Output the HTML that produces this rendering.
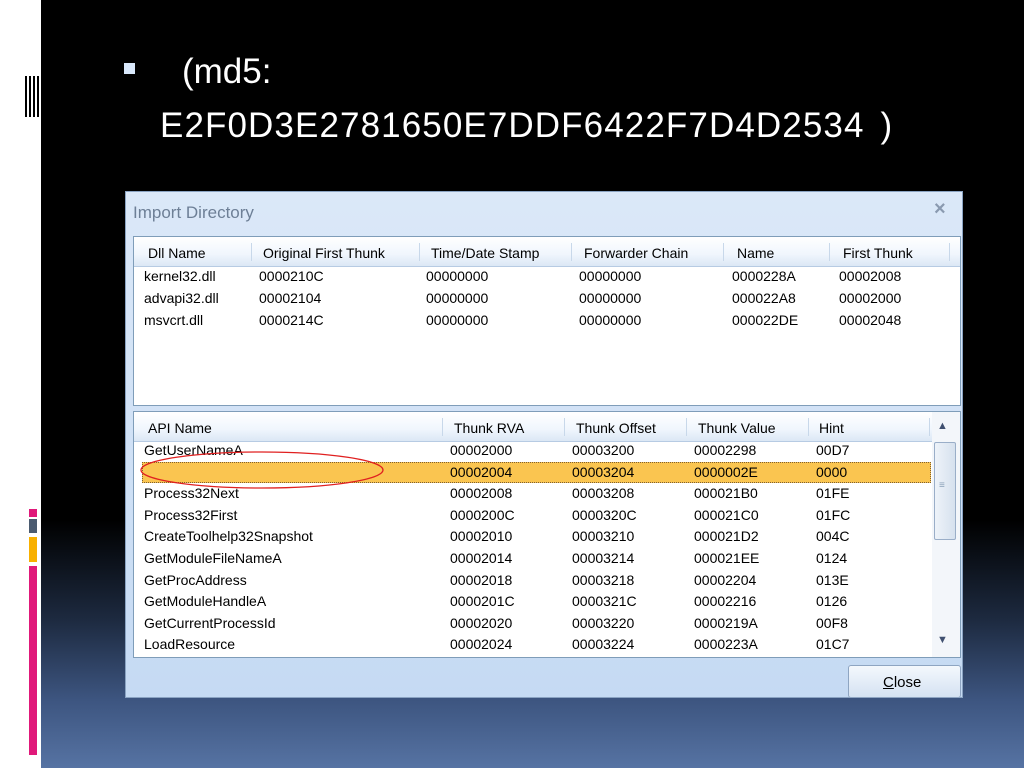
<!DOCTYPE html><html><head><style>
*{margin:0;padding:0;box-sizing:border-box}
body{width:1024px;height:768px;position:relative;overflow:hidden;background:#fff;font-family:"Liberation Sans",sans-serif}
#bg{position:absolute;left:41px;top:0;width:983px;height:768px;background:linear-gradient(#000 0,#000 520px,#1d2a40 620px,#3d5580 700px,#5673a3 768px)}
.abs{position:absolute}
.t{position:absolute;color:#fff;font-size:35px;font-family:"Liberation Sans","Noto Sans CJK SC",sans-serif}
#dlg{position:absolute;left:125px;top:191px;width:838px;height:507px;background:linear-gradient(#dbe8f8,#c5daf3);border:1px solid #8aa3c2}
.list{position:absolute;background:#fff;border:1px solid #7f9db9;overflow:hidden}
.hd{position:absolute;left:0;top:0;right:0;height:30px;background:linear-gradient(#fff,#f0f6fd 60%,#dbe7f5);border-bottom:1px solid #b7cbe3}
.c{position:absolute;font-size:14px;color:#000;white-space:nowrap}
.sep{position:absolute;top:6px;width:1px;height:18px;background:#c8d8ea}
</style></head><body>
<div id="bg"></div>
<div class="abs" style="left:25px;top:76px;width:15px;height:41px;background:repeating-linear-gradient(90deg,#000 0 2px,#fff 2px 4px)"></div>
<div class="abs" style="left:29px;top:509px;width:8px;height:8px;background:#e0197a"></div>
<div class="abs" style="left:29px;top:519px;width:8px;height:14px;background:#4b5b70"></div>
<div class="abs" style="left:29px;top:537px;width:8px;height:25px;background:#f8b000"></div>
<div class="abs" style="left:29px;top:566px;width:8px;height:189px;background:#e0197a"></div>
<div class="abs" style="left:124px;top:63px;width:11px;height:11px;background:#d9e8fb"></div>
<div class="t" style="left:182px;top:52px"><span style="font-weight:100">(</span>md5:</div>
<div class="t" style="left:160px;top:106px;letter-spacing:1.1px">E2F0D3E2781650E7DDF6422F7D4D2534<span style="margin-left:16px">)</span></div>
<div id="dlg">
<div class="c" style="left:7px;top:11px;font-size:17px;color:#6d7f96">Import Directory</div>
<div class="c" style="left:808px;top:6px;font-size:20px;color:#8a9ab0;font-weight:bold">×</div>
<div class="list" style="left:7px;top:44px;width:828px;height:170px">
<div class="hd"></div>
<div class="sep" style="left:117px"></div><div class="sep" style="left:285px"></div><div class="sep" style="left:437px"></div><div class="sep" style="left:589px"></div><div class="sep" style="left:695px"></div><div class="sep" style="left:815px"></div>
<div class="c" style="left:14px;top:8px">Dll Name</div><div class="c" style="left:129px;top:8px">Original First Thunk</div><div class="c" style="left:297px;top:8px">Time/Date Stamp</div><div class="c" style="left:450px;top:8px">Forwarder Chain</div><div class="c" style="left:603px;top:8px">Name</div><div class="c" style="left:709px;top:8px">First Thunk</div>
<div style="position:absolute;top:28px;left:0;right:0;line-height:22px;font-size:14px">
<div style="position:relative;height:22px"><span class="c" style="left:10px">kernel32.dll</span><span class="c" style="left:125px">0000210C</span><span class="c" style="left:292px">00000000</span><span class="c" style="left:445px">00000000</span><span class="c" style="left:598px">0000228A</span><span class="c" style="left:705px">00002008</span></div>
<div style="position:relative;height:22px"><span class="c" style="left:10px">advapi32.dll</span><span class="c" style="left:125px">00002104</span><span class="c" style="left:292px">00000000</span><span class="c" style="left:445px">00000000</span><span class="c" style="left:598px">000022A8</span><span class="c" style="left:705px">00002000</span></div>
<div style="position:relative;height:22px"><span class="c" style="left:10px">msvcrt.dll</span><span class="c" style="left:125px">0000214C</span><span class="c" style="left:292px">00000000</span><span class="c" style="left:445px">00000000</span><span class="c" style="left:598px">000022DE</span><span class="c" style="left:705px">00002048</span></div>
</div></div>
<div class="list" style="left:7px;top:219px;width:828px;height:247px">
<div class="hd"></div>
<div class="sep" style="left:308px"></div><div class="sep" style="left:430px"></div><div class="sep" style="left:552px"></div><div class="sep" style="left:674px"></div><div class="sep" style="left:795px"></div>
<div class="c" style="left:14px;top:8px">API Name</div><div class="c" style="left:320px;top:8px">Thunk RVA</div><div class="c" style="left:442px;top:8px">Thunk Offset</div><div class="c" style="left:564px;top:8px">Thunk Value</div><div class="c" style="left:685px;top:8px">Hint</div>
<div class="abs" style="left:8px;top:50px;width:789px;height:21px;background:#fac550;border:1px dotted #806030"></div>
<div class="abs" style="left:798px;top:0;width:28px;height:247px;background:#f3f6fa"></div>
<div class="abs" style="left:800px;top:30px;width:22px;height:98px;border:1px solid #9aaec8;border-radius:2px;background:linear-gradient(90deg,#eef3f9,#d6e1ee)"></div>
<div class="c" style="left:803px;top:8px;font-size:11px;color:#405070">▲</div>
<div class="c" style="left:803px;top:222px;font-size:11px;color:#405070">▼</div>
<div class="c" style="left:805px;top:68px;font-size:10px;color:#8aa0b8">≡</div>
<div style="position:absolute;top:28px;left:0;line-height:21.6px;font-size:14px">
<div style="position:relative;height:21.6px"><span class="c" style="left:10px">GetUserNameA</span><span class="c" style="left:316px">00002000</span><span class="c" style="left:438px">00003200</span><span class="c" style="left:560px">00002298</span><span class="c" style="left:682px">00D7</span></div>
<div style="position:relative;height:21.6px"><span class="c" style="left:316px">00002004</span><span class="c" style="left:438px">00003204</span><span class="c" style="left:560px">0000002E</span><span class="c" style="left:682px">0000</span></div>
<div style="position:relative;height:21.6px"><span class="c" style="left:10px">Process32Next</span><span class="c" style="left:316px">00002008</span><span class="c" style="left:438px">00003208</span><span class="c" style="left:560px">000021B0</span><span class="c" style="left:682px">01FE</span></div>
<div style="position:relative;height:21.6px"><span class="c" style="left:10px">Process32First</span><span class="c" style="left:316px">0000200C</span><span class="c" style="left:438px">0000320C</span><span class="c" style="left:560px">000021C0</span><span class="c" style="left:682px">01FC</span></div>
<div style="position:relative;height:21.6px"><span class="c" style="left:10px">CreateToolhelp32Snapshot</span><span class="c" style="left:316px">00002010</span><span class="c" style="left:438px">00003210</span><span class="c" style="left:560px">000021D2</span><span class="c" style="left:682px">004C</span></div>
<div style="position:relative;height:21.6px"><span class="c" style="left:10px">GetModuleFileNameA</span><span class="c" style="left:316px">00002014</span><span class="c" style="left:438px">00003214</span><span class="c" style="left:560px">000021EE</span><span class="c" style="left:682px">0124</span></div>
<div style="position:relative;height:21.6px"><span class="c" style="left:10px">GetProcAddress</span><span class="c" style="left:316px">00002018</span><span class="c" style="left:438px">00003218</span><span class="c" style="left:560px">00002204</span><span class="c" style="left:682px">013E</span></div>
<div style="position:relative;height:21.6px"><span class="c" style="left:10px">GetModuleHandleA</span><span class="c" style="left:316px">0000201C</span><span class="c" style="left:438px">0000321C</span><span class="c" style="left:560px">00002216</span><span class="c" style="left:682px">0126</span></div>
<div style="position:relative;height:21.6px"><span class="c" style="left:10px">GetCurrentProcessId</span><span class="c" style="left:316px">00002020</span><span class="c" style="left:438px">00003220</span><span class="c" style="left:560px">0000219A</span><span class="c" style="left:682px">00F8</span></div>
<div style="position:relative;height:21.6px"><span class="c" style="left:10px">LoadResource</span><span class="c" style="left:316px">00002024</span><span class="c" style="left:438px">00003224</span><span class="c" style="left:560px">0000223A</span><span class="c" style="left:682px">01C7</span></div>
</div>
<svg class="abs" style="left:0;top:0" width="300" height="100"><ellipse cx="128" cy="58" rx="121" ry="18" fill="none" stroke="#e02020" stroke-width="1.3"/></svg>
</div>
<div class="abs" style="left:722px;top:473px;width:113px;height:33px;border:1px solid #8ea5c2;border-radius:3px;background:linear-gradient(#f4f8fd,#d5e2f2)"></div>
<div class="c" style="left:757px;top:482px;font-size:15px"><u>C</u>lose</div>
</div>
</body></html>
